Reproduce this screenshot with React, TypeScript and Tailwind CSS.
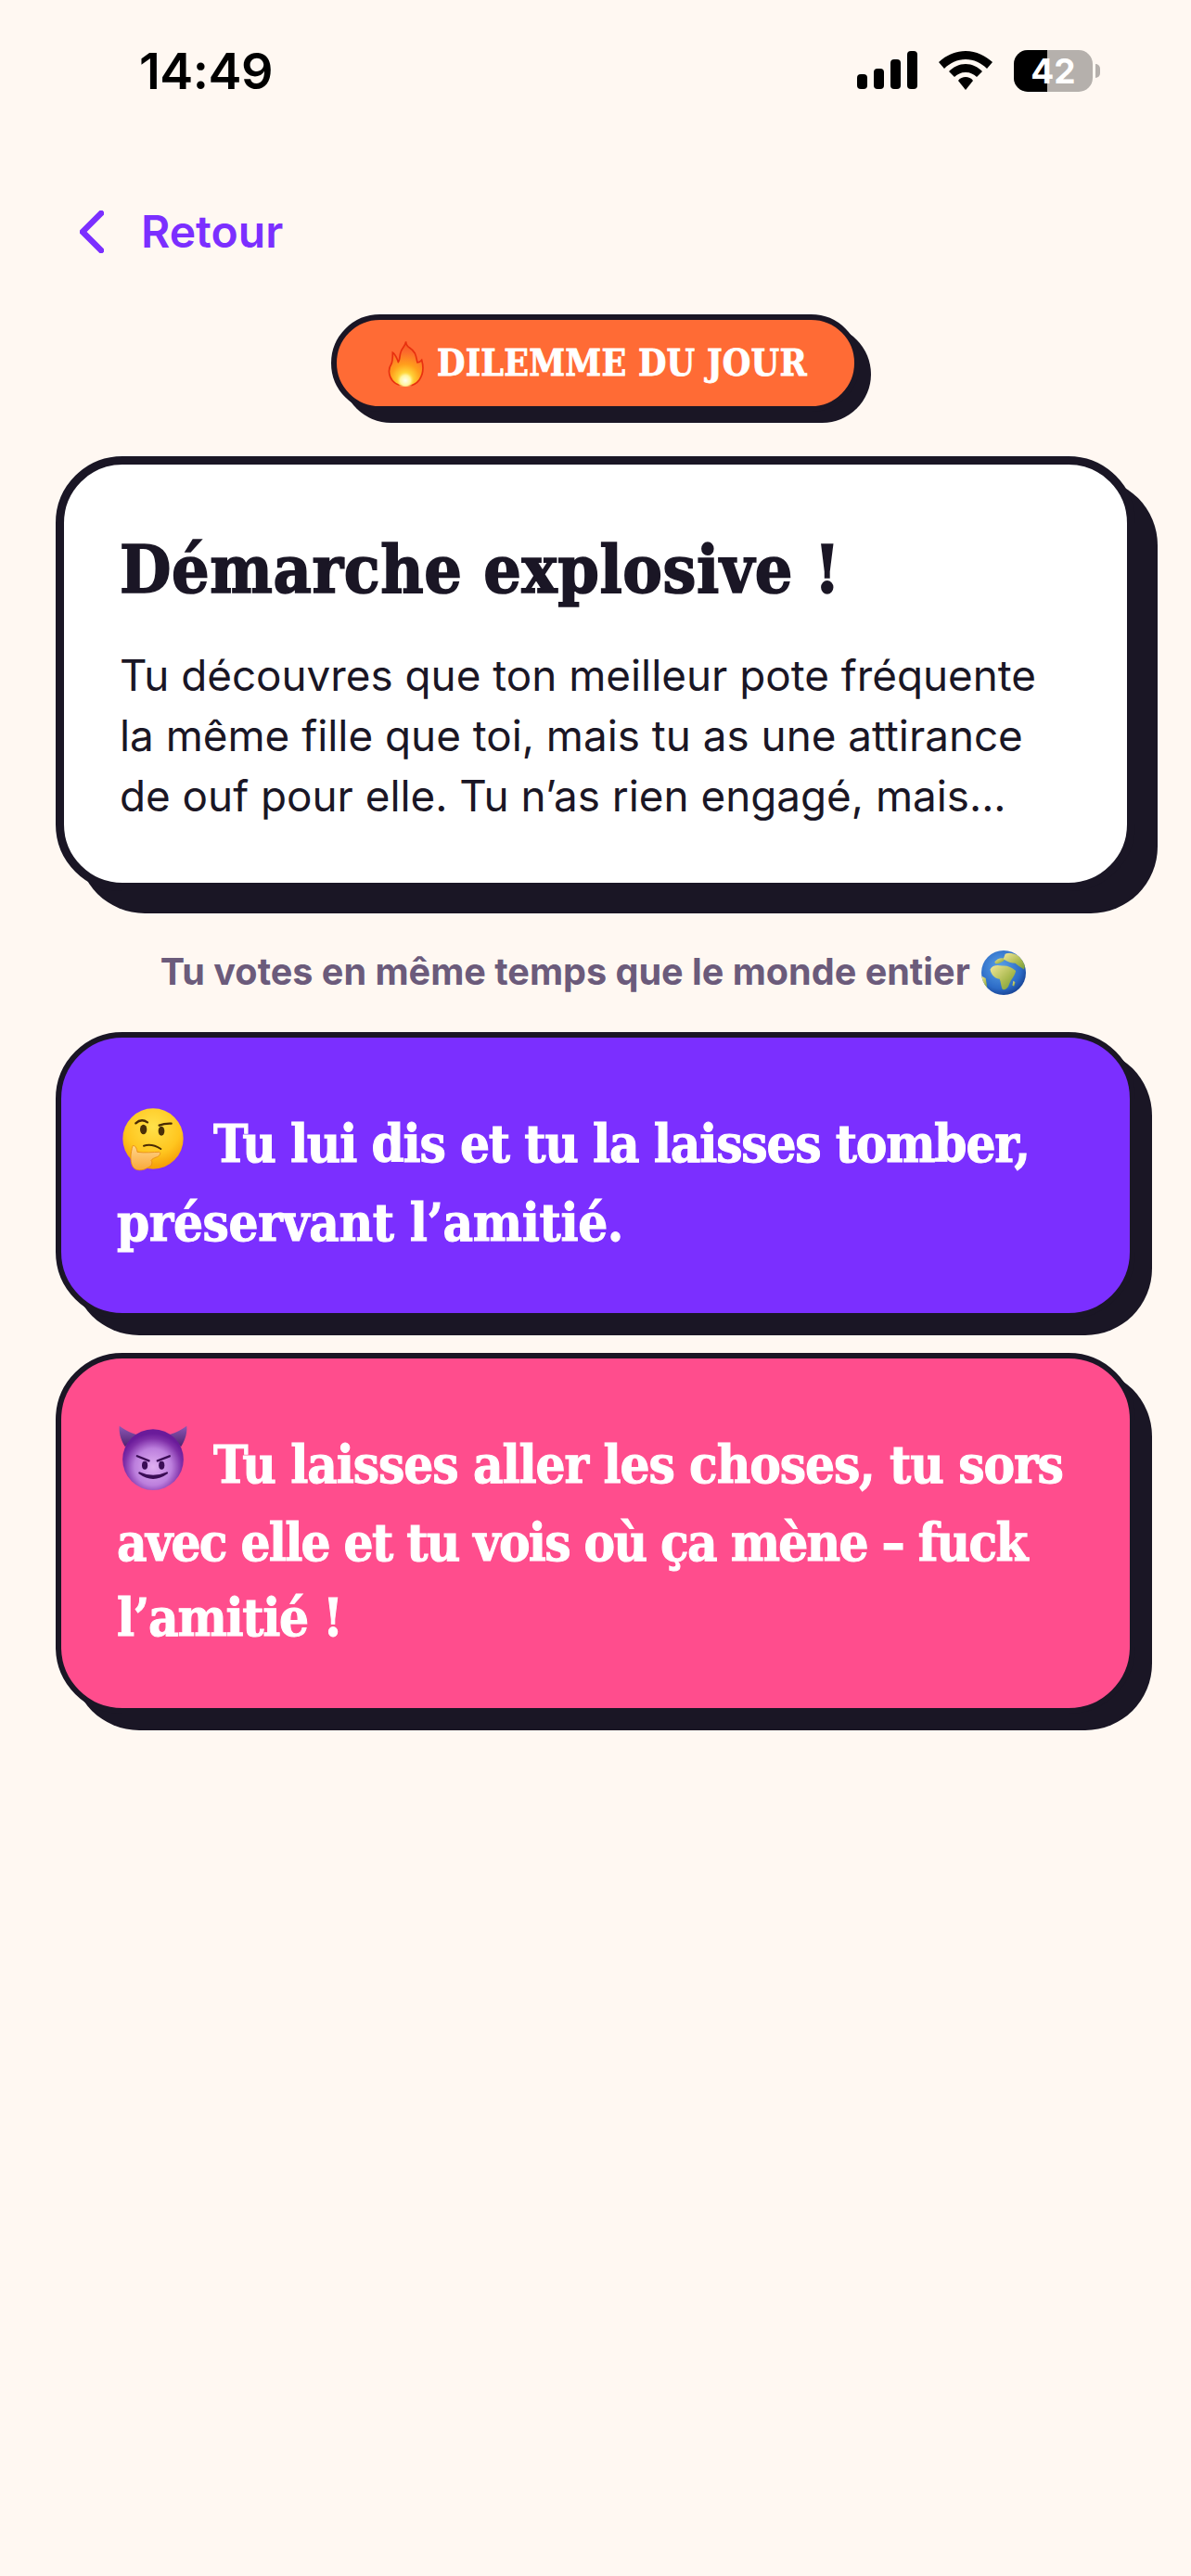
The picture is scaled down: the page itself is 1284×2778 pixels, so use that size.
import React from "react";

function Fire() {
  return (
    <svg viewBox="36 20 120 150" className="inline-block w-[40px] h-[50px] shrink-0">
      <defs>
        <radialGradient id="fireA" gradientUnits="userSpaceOnUse" cx="93" cy="145" r="125">
          <stop offset="0" stopColor="#FFF59D" />
          <stop offset="0.16" stopColor="#FFD93B" />
          <stop offset="0.38" stopColor="#FF9F1C" />
          <stop offset="0.7" stopColor="#FB6A2C" />
          <stop offset="1" stopColor="#F4511E" />
        </radialGradient>
        <radialGradient id="fireB" gradientUnits="userSpaceOnUse" cx="93" cy="150" r="28">
          <stop offset="0" stopColor="#FFFFF0" />
          <stop offset="0.6" stopColor="#FFF59D" />
          <stop offset="1" stopColor="#FFD54F" stopOpacity="0" />
        </radialGradient>
      </defs>
      <path
        d="M95 24C94 45 112 40 124 62C130 75 130 88 132 92C138 92 143 88 146 84C152 105 152 128 138 148C128 162 110 168 93 168C72 168 52 158 44 138C36 118 42 105 48 96C52 88 52 72 52 60C62 66 66 80 70 90C76 84 74 70 78 58C82 44 92 40 95 24Z"
        fill="url(#fireA)"
        stroke="#E8300F"
        strokeWidth="5"
      />
      <circle cx="93" cy="148" r="28" fill="url(#fireB)" />
    </svg>
  );
}

function Thinking() {
  return (
    <svg viewBox="30 30 216 216" className="inline-block w-[72px] h-[72px] align-[-25px] mb-[13px] ml-[3px] mr-[29px]">
      <defs>
        <radialGradient id="thinkA" cx="0.5" cy="0.3" r="0.75">
          <stop offset="0" stopColor="#FFE14A" />
          <stop offset="0.6" stopColor="#FFC61F" />
          <stop offset="1" stopColor="#F39200" />
        </radialGradient>
        <linearGradient id="thinkB" x1="0" y1="0" x2="0" y2="1">
          <stop offset="0" stopColor="#FFD58A" />
          <stop offset="1" stopColor="#F9A83A" />
        </linearGradient>
      </defs>
      <circle cx="138" cy="135" r="98" fill="url(#thinkA)" />
      <path d="M82 85Q100 68 120 82" fill="none" stroke="#4A2A04" strokeWidth="7" strokeLinecap="round" />
      <path d="M158 92Q175 85 197 86" fill="none" stroke="#4A2A04" strokeWidth="7" strokeLinecap="round" />
      <ellipse cx="107" cy="105" rx="11" ry="16" fill="#4A2F08" />
      <ellipse cx="165" cy="110" rx="10" ry="15" fill="#4A2F08" />
      <path d="M108 158Q135 150 163 168" fill="none" stroke="#4A2A04" strokeWidth="6" strokeLinecap="round" />
      <path
        d="M72 158C80 155 85 165 87 178C110 182 140 178 158 178C165 180 160 192 148 195C140 198 136 200 132 205C138 215 132 225 122 228C105 240 80 240 72 225C62 205 66 180 72 158Z"
        fill="url(#thinkB)"
        stroke="#E88A12"
        strokeWidth="2.5"
      />
    </svg>
  );
}

function Devil() {
  return (
    <svg viewBox="27 27 222 216" className="inline-block w-[76px] h-[74px] align-[-24px] -mt-[3px] mb-[13px] ml-[1px] mr-[27px]">
      <defs>
        <radialGradient id="devilA" cx="0.5" cy="0.62" r="0.55">
          <stop offset="0" stopColor="#E0B0F2" />
          <stop offset="0.55" stopColor="#BC7FDD" />
          <stop offset="0.85" stopColor="#7F2FA8" />
          <stop offset="1" stopColor="#6A1B9A" />
        </radialGradient>
        <linearGradient id="devilB" x1="0" y1="0" x2="0" y2="1">
          <stop offset="0" stopColor="#8E58B5" />
          <stop offset="1" stopColor="#4E2170" />
        </linearGradient>
      </defs>
      <path d="M32 32C55 50 75 55 88 60L50 98C35 75 30 50 32 32Z" fill="url(#devilB)" />
      <path d="M244 32C221 50 201 55 188 60L226 98C241 75 246 50 244 32Z" fill="url(#devilB)" />
      <circle cx="138" cy="138" r="96" fill="url(#devilA)" />
      <path d="M88 127L125 142" stroke="#3A0D55" strokeWidth="7" strokeLinecap="round" />
      <path d="M190 127L152 142" stroke="#3A0D55" strokeWidth="7" strokeLinecap="round" />
      <ellipse cx="112" cy="156" rx="9" ry="13" fill="#3A0D55" />
      <ellipse cx="165" cy="156" rx="9" ry="13" fill="#3A0D55" />
      <path d="M95 180Q138 212 182 180Q138 200 95 180Z" fill="#3A0D55" stroke="#3A0D55" strokeWidth="6" strokeLinejoin="round" />
    </svg>
  );
}

function Globe() {
  return (
    <svg viewBox="42 31 142 142" className="inline-block w-[48px] h-[48px] align-[-11px] ml-[3px]">
      <defs>
        <radialGradient id="globeA" cx="0.42" cy="0.38" r="0.68">
          <stop offset="0" stopColor="#5BA3E8" />
          <stop offset="0.7" stopColor="#2C6BC6" />
          <stop offset="1" stopColor="#143C8C" />
        </radialGradient>
        <linearGradient id="globeB" x1="0" y1="0" x2="1" y2="1">
          <stop offset="0" stopColor="#F2E79A" />
          <stop offset="0.6" stopColor="#A9B94E" />
          <stop offset="1" stopColor="#6F9A3C" />
        </linearGradient>
        <clipPath id="globeC">
          <circle cx="113" cy="102" r="71" />
        </clipPath>
      </defs>
      <circle cx="113" cy="102" r="71" fill="url(#globeA)" />
      <g clipPath="url(#globeC)" fill="url(#globeB)">
        <path d="M70 92C76 78 92 76 108 80C122 78 140 84 152 96C150 106 144 116 138 124C134 130 132 136 128 146C122 156 112 160 108 152C104 142 104 130 100 122C88 122 74 112 70 92Z" />
        <path d="M84 68C92 56 108 52 118 58C112 66 100 72 88 74Z" />
        <path d="M118 42C134 34 164 42 184 70L178 92C168 84 158 80 150 72C138 72 126 66 112 58Z" />
        <path d="M42 112L56 120L62 160L42 150Z" />
        <path d="M144 128L150 132L146 146L141 142Z" />
      </g>
    </svg>
  );
}

const serif = "font-['DejaVu_Serif_Condensed','DejaVu_Serif',serif] font-bold";
const shadowCard =
  "w-full rounded-[72px] border-[6px] border-[#1a1625] pl-[60px] pr-[30px] pt-[74px] pb-[57px] shadow-[18px_18px_0_#1a1625] text-white text-[56px] leading-[81px] whitespace-nowrap [-webkit-text-stroke:1px_#ffffff]";

export default function App() {
  return (
    <div className="min-h-[2778px] bg-[#fff8f2] font-['Inter',sans-serif] flex flex-col">
      <div className="h-[152px] flex items-center justify-between pl-[150px] pr-[98px]">
        <span className="text-[54px] font-semibold text-black tracking-[-0.5px]">14:49</span>
        <div className="flex items-center">
          <svg viewBox="0 0 65 42" className="w-[65px] h-[42px]" fill="#000">
            <rect x="0" y="25" width="11" height="16" rx="4" />
            <rect x="18" y="19" width="11" height="22" rx="4" />
            <rect x="36" y="9" width="11" height="32" rx="4" />
            <rect x="54" y="0" width="11" height="41" rx="4" />
          </svg>
          <svg viewBox="0 0 58 42" className="w-[58px] h-[42px] ml-[23px]" fill="#000">
            <path d="M29 0C41 0 50 5 58 12L52 19C46 13 38 9 29 9C20 9 12 13 6 19L0 12C8 5 17 0 29 0Z" />
            <path d="M29 14C36 14 42 17 47 22L41 28C38 25 34 23 29 23C24 23 20 25 17 28L11 22C16 17 22 14 29 14Z" />
            <path d="M29 28C32 28 35 29 37 32L29 42L21 32C23 29 26 28 29 28Z" />
          </svg>
          <div className="relative w-[85px] h-[45px] ml-[23px] rounded-[15px] overflow-hidden flex bg-[#b5b0ac]">
            <div className="w-[36px] bg-black" />
            <span className="absolute inset-0 flex items-center justify-center text-white text-[37px] font-bold leading-none">42</span>
          </div>
          <div className="w-[5px] h-[15px] ml-[3px] rounded-r-full bg-[#b5b0ac]" />
        </div>
      </div>

      <div className="mt-[60px] h-[76px] pl-[86px] flex items-center gap-[40px]">
        <svg viewBox="0 0 26 46" className="w-[26px] h-[46px]" fill="none" stroke="#7b2fff" strokeWidth="6.5" strokeLinecap="round" strokeLinejoin="round">
          <path d="M23 3L3 23L23 43" />
        </svg>
        <span className="text-[48px] font-semibold text-[#7b2fff]">Retour</span>
      </div>

      <div className="mx-[60px] flex flex-col items-center">
        <div className="mt-[51px] h-[105px] w-[570px] rounded-full border-[6px] border-[#1a1625] bg-[#ff6b35] shadow-[12px_12px_0_#1a1625] flex items-center pl-[55px] gap-[13px]">
          <Fire />
          <span className={`${serif} text-white text-[39px] tracking-[0.25px] whitespace-nowrap [-webkit-text-stroke:0.8px_#ffffff]`}>DILEMME DU JOUR</span>
        </div>

        <div className="mt-[48px] w-full rounded-[72px] border-[9px] border-[#1a1625] bg-white pl-[60px] pr-[30px] pt-[68px] pb-[61px] shadow-[24px_24px_0_#1a1625]">
          <h1 className={`${serif} text-[#1a1625] text-[71px] leading-[90px] tracking-[0.6px] whitespace-nowrap [-webkit-text-stroke:1.6px_#1a1625]`}>Démarche explosive !</h1>
          <p className="mt-[37px] text-[45.8px] leading-[65px] text-[#1a1625] whitespace-nowrap">
            Tu découvres que ton meilleur pote fréquente
            <br />
            la même fille que toi, mais tu as une attirance
            <br />
            de ouf pour elle. Tu n’as rien engagé, mais...
          </p>
        </div>

        <p className="mt-[60px] h-[54px] pr-[5px] text-[39.6px] leading-[54px] font-bold text-[#6b5b7b] whitespace-nowrap">
          Tu votes en même temps que le monde entier <Globe />
        </p>

        <div className={`mt-[38px] bg-[#7b2fff] ${shadowCard} ${serif}`}>
          <Thinking />
          <span className="tracking-[-1.2px]">Tu lui dis et tu la laisses tomber,</span>
          <br />
          <span className="tracking-[-0.4px]">préservant l’amitié.</span>
        </div>

        <div className={`mt-[37px] bg-[#ff4d8d] ${shadowCard} ${serif}`}>
          <Devil />
          <span className="tracking-[-1.1px]">Tu laisses aller les choses, tu sors</span>
          <br />
          <span className="tracking-[-1.75px]">avec elle et tu vois où ça mène – fuck</span>
          <br />
          <span className="tracking-[-1.3px]">l’amitié !</span>
        </div>
      </div>
    </div>
  );
}
